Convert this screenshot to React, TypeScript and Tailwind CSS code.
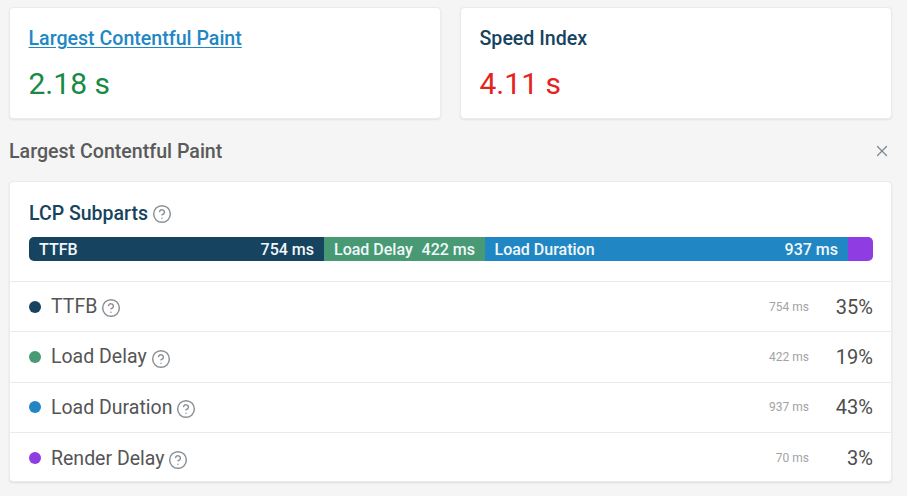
import React from 'react';
import { CircleHelp, X } from 'lucide-react';

const rows = [
  { label: 'TTFB', dot: 'bg-[#16435f]', time: '754 ms', pct: '35%' },
  { label: 'Load Delay', dot: 'bg-[#479a74]', time: '422 ms', pct: '19%' },
  { label: 'Load Duration', dot: 'bg-[#2187c4]', time: '937 ms', pct: '43%' },
  { label: 'Render Delay', dot: 'bg-[#8f3de2]', time: '70 ms', pct: '3%' },
];

function MetricCard({ children, value, valueClass }: { children: React.ReactNode; value: string; valueClass: string }) {
  return (
    <div className="flex-1 h-[112px] bg-white rounded-[4px] border border-[#ebebeb] shadow-[0_1px_2px_rgba(0,0,0,0.08)] pl-[18.5px] pt-[18px]">
      <div className="text-[19.6px] leading-[26px] font-medium">{children}</div>
      <div className={`mt-[15px] text-[30px] leading-[34px] ${valueClass}`}>{value}</div>
    </div>
  );
}

export default function App() {
  return (
    <div className="w-[907px] h-[496px] overflow-hidden bg-[#f5f5f5] px-[9px] pt-[7px] font-['Roboto',sans-serif]">
      {/* Top metrics */}
      <div className="flex gap-[19px] pr-[6px]">
        <MetricCard value="2.18 s" valueClass="text-[#188a45]">
          <a className="text-[#2187c4] underline underline-offset-2" href="#">Largest Contentful Paint</a>
        </MetricCard>
        <MetricCard value="4.11 s" valueClass="text-[#e5231c]">
          <span className="text-[#16435f]">Speed Index</span>
        </MetricCard>
      </div>

      <div className="flex items-center justify-between h-[26px] mt-[20px] pr-[7px]">
        <h2 className="text-[19.6px] font-medium text-[#5a5a5a]">Largest Contentful Paint</h2>
        <X className="w-[18px] h-[18px] -mt-[2px] text-[#7d8790]" strokeWidth={1.75} />
      </div>

      {/* Subparts */}
      <div className="mt-[16px] mr-[6px] bg-white rounded-[4px] border border-[#ebebeb] shadow-[0_1px_2px_rgba(0,0,0,0.1)]">
        <div className="px-[19px] pt-[19px] pb-[20px]">
          <div className="flex items-center gap-[4px] h-[25px] text-[19.5px] font-medium text-[#16435f]">
            LCP Subparts
            <CircleHelp className="w-[20px] h-[20px] mt-[1px] text-[#8a8f94]" strokeWidth={1.75} />
          </div>
          <div className="flex w-[844px] h-[24px] mt-[11px] rounded-[5px] overflow-hidden text-[16px] font-medium text-[#f2f7fa]">
            <div className="w-[295px] bg-[#16435f] flex items-center justify-between px-[10px] pt-[1px]">
              <span>TTFB</span>
              <span>754 ms</span>
            </div>
            <div className="w-[161px] bg-[#479a74] flex items-center justify-between px-[10px] pt-[1px]">
              <span>Load Delay</span>
              <span>422 ms</span>
            </div>
            <div className="w-[363px] bg-[#2187c4] flex items-center justify-between pl-[9.5px] pr-[10px] pt-[1px]">
              <span>Load Duration</span>
              <span>937 ms</span>
            </div>
            <div className="w-[25px] bg-[#8f3de2]" />
          </div>
        </div>
        {rows.map((row) => (
          <div key={row.label} className="flex items-center h-[50.4px] last:h-[49px] last:pt-[2px] border-t border-[#ebebeb] pl-[19px] pr-[18px]">
            <span className={`w-[12px] h-[12px] rounded-full ${row.dot}`} />
            <span className="ml-[10px] text-[19.5px] text-[#555]">{row.label}</span>
            <CircleHelp className="ml-[4px] mt-[3px] w-[20px] h-[20px] text-[#8a8f94]" strokeWidth={1.75} />
            <span className="ml-auto text-[12px] text-[#a3a3a3]">{row.time}</span>
            <span className="w-[64px] text-right text-[20px] text-[#4d4d4d]">{row.pct}</span>
          </div>
        ))}
      </div>
    </div>
  );
}
